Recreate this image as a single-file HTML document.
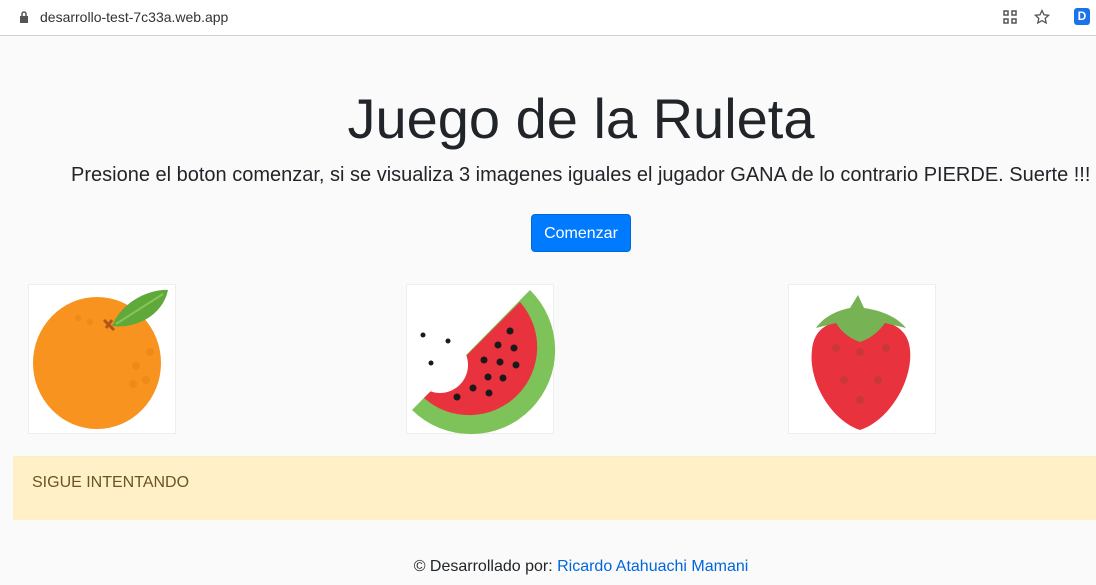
<!DOCTYPE html>
<html><head><style>
body{margin:0;width:1096px;height:585px;overflow:hidden;background:#fafafa;font-family:"Liberation Sans",Arial,sans-serif;color:#212529;position:relative}
.bar{position:absolute;left:0;top:0;width:1096px;height:35px;background:#fff;border-bottom:1px solid #d0d0d0}
.url{position:absolute;left:40px;top:9px;font-size:14px;color:#333}
.ab{position:absolute}
h1{position:absolute;left:0;width:1162px;text-align:center;top:86px;margin:0;font-weight:400;font-size:56px;color:#212529}
.sub{position:absolute;left:71px;top:164px;font-size:20px;white-space:nowrap}
.btn{position:absolute;left:531px;top:214px;width:100px;height:38px;background:#007bff;color:#fff;border-radius:4px;font-size:16px;line-height:37px;text-align:center;box-sizing:border-box;border:1px solid #0069d9}
.img{position:absolute;top:284px;width:148px;height:150px;border:1px solid #eee;box-sizing:border-box;background:#fff}
.alert{position:absolute;left:13px;top:456px;width:1090px;height:64px;background:#fff0c8;border-top:1px solid #fbeec0;box-sizing:border-box}
.alert span{position:absolute;left:19px;top:17px;font-size:16px;color:#6b5521}
.foot{position:absolute;left:0;width:1162px;text-align:center;top:558px;font-size:16px}
.foot a{color:#0066dd;text-decoration:none}
</style></head><body>
<div class="bar">
<svg class="ab" style="left:19px;top:11px" width="10" height="12"><rect x="1" y="5" width="8" height="7" fill="#555"/><path d="M3 5V3a2 2 0 0 1 4 0v2" stroke="#555" fill="none" stroke-width="1.5"/></svg>
<div class="url">desarrollo-test-7c33a.web.app</div>
<svg class="ab" style="left:1002px;top:9px" width="16" height="16"><path d="M2 2h4v4H2zM10 2h4v4h-4zM2 10h4v4H2zM10 10h4v4h-4z" fill="none" stroke="#555" stroke-width="1.5"/></svg>
<svg class="ab" style="left:1034px;top:9px" width="16" height="16"><path d="M8 1.5l2 4.3 4.6.5-3.4 3.1 1 4.6L8 11.6 3.8 14l1-4.6L1.4 6.3 6 5.8z" fill="none" stroke="#555" stroke-width="1.3"/></svg>
<div class="ab" style="left:1074px;top:8px;width:16px;height:17px;background:#1a73e8;border-radius:3px;color:#fff;font-size:12px;font-weight:bold;text-align:center;line-height:17px">D</div>
</div>
<h1>Juego de la Ruleta</h1>
<div class="sub">Presione el boton comenzar, si se visualiza 3 imagenes iguales el jugador GANA de lo contrario PIERDE. Suerte !!!</div>
<div class="btn">Comenzar</div>

<div class="img" style="left:28px"></div>
<svg class="ab" style="left:28px;top:284px" width="148" height="150">
<ellipse cx="69" cy="79" rx="64" ry="66" fill="#f7931e"/>
<path d="M84 42 C95 15 125 5 140 6 C135 30 110 45 84 42Z" fill="#5fa83a"/>
<path d="M88 40 L135 10" stroke="#8cc25a" stroke-width="2"/>
<path d="M76 36 L86 46 M84 36 L78 44" stroke="#b0561a" stroke-width="3"/>
<g fill="#ec8a1a"><circle cx="122" cy="68" r="4"/><circle cx="108" cy="82" r="4"/><circle cx="118" cy="96" r="4"/><circle cx="105" cy="100" r="4"/><circle cx="62" cy="38" r="3"/><circle cx="50" cy="34" r="3"/></g>
</svg>

<div class="img" style="left:406px"></div>
<svg class="ab" style="left:0;top:0" width="1096" height="585">
<path d="M412 410 A84 84 0 0 0 530 290 Z" fill="#7ec35a"/>
<path d="M424 398 A68 68 0 0 0 520 302 Z" fill="#e8323d"/>
<circle cx="440" cy="365" r="28" fill="#fff"/>
<g fill="#1a1a1a"><circle cx="510" cy="331" r="3.5"/><circle cx="498" cy="345" r="3.5"/><circle cx="514" cy="348" r="3.5"/><circle cx="484" cy="360" r="3.5"/><circle cx="500" cy="362" r="3.5"/><circle cx="516" cy="365" r="3.5"/><circle cx="488" cy="377" r="3.5"/><circle cx="503" cy="378" r="3.5"/><circle cx="473" cy="388" r="3.5"/><circle cx="489" cy="393" r="3.5"/><circle cx="457" cy="397" r="3.5"/><circle cx="423" cy="335" r="2.5"/><circle cx="448" cy="341" r="2.5"/><circle cx="431" cy="363" r="2.5"/></g>
</svg>

<div class="img" style="left:788px"></div>
<svg class="ab" style="left:780px;top:280px" width="160" height="160">
<path d="M80 150 C50 140 28 100 32 70 C34 45 55 38 80 42 C105 38 128 45 130 70 C133 100 110 140 80 150Z" fill="#e8323d"/>
<path d="M36 48 C45 35 60 30 70 28 L78 15 L84 28 C98 30 115 35 126 48 L105 43 C100 50 92 58 80 62 C68 58 60 50 56 43Z" fill="#77b255"/>
<g fill="#c8383a"><circle cx="56" cy="68" r="4"/><circle cx="80" cy="72" r="4"/><circle cx="106" cy="68" r="4"/><circle cx="64" cy="100" r="4"/><circle cx="98" cy="100" r="4"/><circle cx="80" cy="120" r="4"/></g>
</svg>

<div class="alert"><span>SIGUE INTENTANDO</span></div>
<div class="foot">© Desarrollado por: <a>Ricardo Atahuachi Mamani</a></div>
</body></html>
